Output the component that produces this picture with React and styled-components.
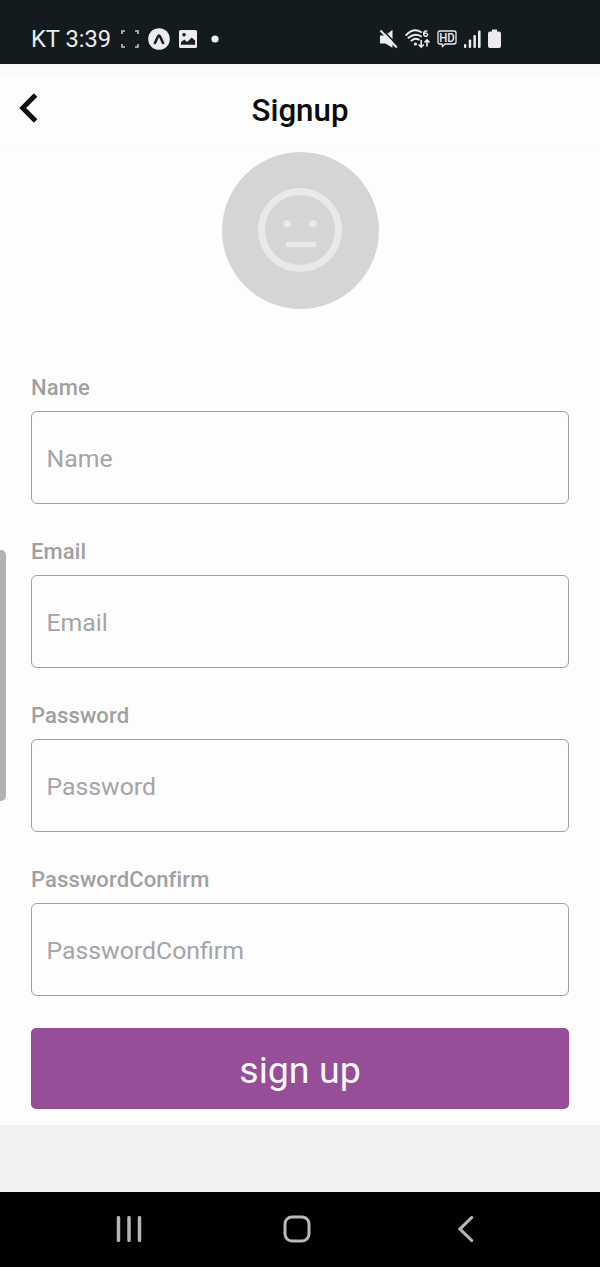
import React from "react";
import styled, { createGlobalStyle } from "styled-components";

const GlobalStyle = createGlobalStyle`
  *, *::before, *::after { box-sizing: border-box; }
  body { margin: 0; background: #000; font-family: Roboto, "Liberation Sans", sans-serif; }
  svg { display: block; flex: none; }
`;

const Screen = styled.div`
  position: relative;
  display: flex;
  flex-direction: column;
  width: 600px;
  height: 1267px;
  overflow: hidden;
  background: #f1f0f2;
`;

const StatusBar = styled.header`
  display: flex;
  justify-content: space-between;
  flex: none;
  height: 64px;
  padding: 27px 99px 0 31px;
  background: #141b1f;
  color: #ececee;
`;

const StatusGroup = styled.div`
  display: flex;
  align-items: center;
  height: 24px;
  gap: ${(p) => p.$gap}px;
`;

const MoreNotifications = styled.span`
  padding-left: 5px;
`;

const Clock = styled.span`
  width: 80.5px;
  font-size: 23.7px;
  line-height: 24px;
  white-space: nowrap;
`;

const NavHeader = styled.div`
  display: grid;
  grid-template-columns: 60px 1fr 60px;
  align-items: center;
  flex: none;
  height: 88px;
  background: linear-gradient(#f8f8f9 0, #fdfdfe 14px, #fefdfe 84px, #fcfbfd 85px);
`;

const BackButton = styled.button`
  display: flex;
  align-items: center;
  height: 60px;
  padding: 0 0 0 18px;
  border: 0;
  background: none;
`;

const Title = styled.h1`
  margin: 5px 0 0;
  color: #0c0c0d;
  font-size: 31.3px;
  font-weight: 500;
  line-height: 40px;
  text-align: center;
`;

const Form = styled.form`
  display: flex;
  flex-direction: column;
  flex: none;
  height: 973px;
  padding: 0 31px;
  background: #fefdfe;
`;

const Avatar = styled.div`
  display: flex;
  align-items: center;
  justify-content: center;
  align-self: center;
  width: 157px;
  height: 157px;
  margin-bottom: 66px;
  padding-bottom: 2px;
  border-radius: 50%;
  background: #d5d4d7;
`;

const Field = styled.label`
  display: block;
  height: 164.1px;
`;

const FieldLabel = styled.span`
  display: block;
  height: 36px;
  color: #a09fa2;
  font-size: 22px;
  font-weight: 500;
  letter-spacing: 0.12px;
  line-height: 26px;
`;

const Input = styled.input`
  display: block;
  width: 100%;
  height: 93px;
  padding: 2px 14px 0 14.5px;
  border: 1.5px solid #9f9ea2;
  border-radius: 6px;
  outline: 0;
  background: transparent;
  color: #111;
  font: 400 24.8px Roboto, "Liberation Sans", sans-serif;
  &::placeholder { color: #a5a4a7; opacity: 1; }
`;

const SubmitButton = styled.button`
  height: 81px;
  margin-top: -3px;
  padding: 2px 0 0;
  border: 0;
  border-radius: 5px;
  background: #954e97;
  color: #fdf9fd;
  font: 400 37.6px Roboto, "Liberation Sans", sans-serif;
`;

const NavigationBar = styled.nav`
  display: grid;
  grid-template-columns: repeat(3, 168.5px);
  justify-content: center;
  justify-items: center;
  align-items: center;
  flex: none;
  height: 75px;
  margin-top: auto;
  padding: 0 6px 1px 0;
  background: #000;
`;

const EdgeHandle = styled.div`
  position: absolute;
  left: 0;
  top: 550px;
  width: 6px;
  height: 251px;
  border-radius: 0 5px 5px 0;
  background: #b1b1b2;
`;

const CaptureIcon = () => (
  <svg width="18" height="18" viewBox="0 0 18 18" fill="none" stroke="#c3c7ca" strokeWidth="1.6">
    <path d="M1 4V1H4M14 1H17V4M17 14V17H14M4 17H1V14" />
  </svg>
);

const AppIcon = () => (
  <svg width="22" height="22" viewBox="0 0 22 22">
    <circle cx="11" cy="11" r="10.8" fill="#ececee" />
    <path d="M6.9 15C8.7 12.3 9.6 7.6 11 7.600s2.300 4.700 4.100 7.400" fill="none" stroke="#182025" strokeWidth="2.6" strokeLinecap="round" />
  </svg>
);

const ImageIcon = () => (
  <svg width="18" height="18" viewBox="0 0 18 18">
    <rect x="1" y="1" width="16" height="16" rx="0.5" fill="#ececee" stroke="#ececee" strokeWidth="2" />
    <circle cx="5" cy="4.8" r="1.8" fill="#182025" />
    <path d="M2 14.800V12.200L5.300 9.500l2.800 2.500 4.600-4.500 3.400 3v4.300z" fill="#182025" />
  </svg>
);

const Dot = () => (
  <svg width="8" height="8" viewBox="0 0 8 8"><circle cx="4" cy="4" r="3.6" fill="#f4f4f5" /></svg>
);

const MuteIcon = () => (
  <svg width="19" height="20" viewBox="0 0 19 20">
    <path d="M1 6.500h5.500L13.500.800v18L6.500 14.500H1z" fill="#ececee" />
    <path d="M3.200.600L19 16.900" stroke="#141b1f" strokeWidth="1.5" />
    <path d="M1.500 1.500L17.800 18.500" stroke="#ececee" strokeWidth="2" />
  </svg>
);

const WifiIcon = () => (
  <svg width="25" height="20" viewBox="0 0 25 20" fill="none" stroke="#ececee" strokeWidth="1.9">
    <path d="M1.200 6Q8.700-1.500 16 3M3.500 8.800Q9.700 3.500 16 7.200M6.400 11.600Q10 8.500 13.800 10.600" strokeLinecap="round" />
    <circle cx="10.5" cy="15" r="1.6" fill="#ececee" stroke="none" />
    <path d="M16.200 11v7M13.700 15.500l2.500 2.500 2.500-2.500M22 17.500V11M19.500 13.500L22 11l2.500 2.500" strokeWidth="1.6" />
    <path d="M22.400 2.100c-2.600-.6-3.800.4-3.800 2.700 0 3.300 4 3 4 .8 0-1.800-2.400-2-3.800-.7" strokeWidth="1.4" />
  </svg>
);

const HdIcon = () => (
  <svg width="20" height="18" viewBox="0 0 20 18">
    <path d="M3 1h14q2 0 2 2v9q0 2-2 2H8l-2.500 2.500L5 14H3q-2 0-2-2V3q0-2 2-2z" fill="none" stroke="#ececee" strokeWidth="1.3" />
    <text x="10" y="11.8" textAnchor="middle" textLength="15.5" lengthAdjust="spacingAndGlyphs" fill="#ececee" fontFamily="Roboto" fontSize="12" fontWeight="500">HD</text>
  </svg>
);

const SignalIcon = () => (
  <svg width="17" height="18" viewBox="0 0 17 18" fill="#ececee">
    <rect x="0" y="14" width="2.3" height="4" rx="1" />
    <rect x="4.7" y="9.5" width="2.5" height="8.5" rx="1" />
    <rect x="9.4" y="5" width="2.5" height="13" rx="1" />
    <rect x="14" y="0.5" width="2.6" height="17.5" rx="1" />
  </svg>
);

const BatteryIcon = () => (
  <svg width="13" height="20" viewBox="0 0 13 20">
    <path d="M4 .5h5v2h2q2 0 2 2V17q0 2-2 2H2q-2 0-2-2V4.500q0-2 2-2h2z" fill="#ececee" />
  </svg>
);

const BackArrow = () => (
  <svg width="21" height="30" viewBox="0 0 21 30" fill="none" stroke="#111113" strokeWidth="4.9">
    <path d="M17.600 2L4.700 15L17.600 28" />
  </svg>
);

const NeutralFace = () => (
  <svg width="86" height="86" viewBox="0 0 86 86" fill="#e9e8eb">
    <circle cx="43" cy="43" r="38.5" fill="none" stroke="#e9e8eb" strokeWidth="7" />
    <circle cx="30.2" cy="36.8" r="3.8" />
    <circle cx="56.2" cy="36.8" r="3.8" />
    <rect x="28.8" y="54.7" width="30.5" height="5.5" rx="1.5" />
  </svg>
);

const RecentsIcon = () => (
  <svg width="26" height="26" viewBox="0 0 26 26" stroke="#b5b5b5" strokeWidth="3.5" strokeLinecap="round">
    <path d="M2.500 1.700V24.300M13 1.700V24.300M23.500 1.700V24.300" />
  </svg>
);

const HomeIcon = () => (
  <svg width="28" height="28" viewBox="0 0 28 28">
    <rect x="2" y="2" width="24" height="24" rx="7" fill="none" stroke="#b9b9b9" strokeWidth="3" />
  </svg>
);

const SystemBackIcon = () => (
  <svg width="16" height="28" viewBox="0 0 16 28" fill="none" stroke="#b9b9b9" strokeWidth="3.1" strokeLinecap="round">
    <path d="M13.700 2.500L2 14L13.700 25.500" />
  </svg>
);

const fields = [
  { label: "Name", type: "text" },
  { label: "Email", type: "email" },
  { label: "Password", type: "password" },
  { label: "PasswordConfirm", type: "password" },
];

export default function App() {
  return (
    <>
      <GlobalStyle />
      <Screen>
        <StatusBar>
          <StatusGroup $gap={9}>
            <Clock>KT 3:39</Clock>
            <CaptureIcon />
            <AppIcon />
            <ImageIcon />
            <MoreNotifications><Dot /></MoreNotifications>
          </StatusGroup>
          <StatusGroup $gap={7}>
            <MuteIcon />
            <WifiIcon />
            <HdIcon />
            <SignalIcon />
            <BatteryIcon />
          </StatusGroup>
        </StatusBar>
        <NavHeader>
          <BackButton type="button" aria-label="Back"><BackArrow /></BackButton>
          <Title>Signup</Title>
        </NavHeader>
        <Form>
          <Avatar><NeutralFace /></Avatar>
          {fields.map(({ label, type }) => (
            <Field key={label}>
              <FieldLabel>{label}</FieldLabel>
              <Input type={type} placeholder={label} />
            </Field>
          ))}
          <SubmitButton type="button">sign up</SubmitButton>
        </Form>
        <NavigationBar>
          <RecentsIcon />
          <HomeIcon />
          <SystemBackIcon />
        </NavigationBar>
        <EdgeHandle />
      </Screen>
    </>
  );
}
